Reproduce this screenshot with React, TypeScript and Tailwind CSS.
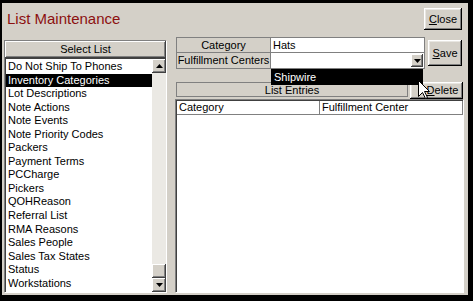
import React from "react";

const items = [
  "Do Not Ship To Phones",
  "Inventory Categories",
  "Lot Descriptions",
  "Note Actions",
  "Note Events",
  "Note Priority Codes",
  "Packers",
  "Payment Terms",
  "PCCharge",
  "Pickers",
  "QOHReason",
  "Referral List",
  "RMA Reasons",
  "Sales People",
  "Sales Tax States",
  "Status",
  "Workstations",
];

const raised =
  "bg-[#d4d0c8] shadow-[inset_-1px_-1px_0_#404040,inset_1px_1px_0_#ffffff,inset_-2px_-2px_0_#808080,inset_2px_2px_0_#d4d0c8]";
const btn =
  "flex items-center justify-center bg-[#d4d0c8] shadow-[inset_-1px_-1px_0_#000000,inset_1px_1px_0_#ffffff,inset_-2px_-2px_0_#808080,inset_2px_2px_0_#e8e6e1]";

function Tri({ up }: { up?: boolean }) {
  return (
    <svg width="7" height="4" viewBox="0 0 7 4">
      {up ? <path d="M3.5 0 L7 4 L0 4 Z" fill="#000" /> : <path d="M0 0 L7 0 L3.5 4 Z" fill="#000" />}
    </svg>
  );
}

export default function App() {
  return (
    <div className="w-[473px] h-[301px] bg-black pt-[3px] pl-[2px] pr-[5px] pb-[6px]">
      <div className="relative flex h-full flex-col bg-[#d4d0c8] text-[11px] text-black font-['Liberation_Sans',Arial,sans-serif]">
        {/* title row */}
        <div className="flex h-[34px] items-start justify-between">
          <div className="ml-[5px] mt-[6px] text-[15px] leading-[20px] text-[#8c1010]">List Maintenance</div>
          <div className={`${btn} mr-[6px] mt-[5px] h-[22px] w-[38px]`}>
            <span>
              <span className="underline">C</span>lose
            </span>
          </div>
        </div>

        {/* body */}
        <div className="flex">
          {/* left panel */}
          <div className="ml-[2px] mt-[3px] flex h-[252px] w-[162px] flex-col border-t border-l border-[#808080] shadow-[1px_1px_0_#ffffff]">
            <div className={`${raised} h-[17px] text-center leading-[16px]`}>Select List</div>
            <div className="flex flex-1 border-t border-l border-[#404040] bg-white">
              <div className="flex-1 pt-[1px]">
                {items.map((it) => {
                  const sel = it === "Inventory Categories";
                  return (
                    <div
                      key={it}
                      className={`h-[13.55px] whitespace-nowrap pl-[2px] leading-[13.55px] ${
                        sel ? "bg-black text-white" : ""
                      }`}
                    >
                      {it}
                    </div>
                  );
                })}
              </div>
              <div className="flex w-[14px] flex-col bg-[#ebe9e4]">
                <div className={`${raised} flex h-[14px] items-center justify-center`}>
                  <Tri up />
                </div>
                <div className="flex-1" />
                <div className={`${raised} h-[14px]`} />
                <div className={`${raised} flex h-[14px] items-center justify-center`}>
                  <Tri />
                </div>
              </div>
            </div>
          </div>

          {/* right area */}
          <div className="ml-[9px] flex w-[288px] flex-col">
            <div className="flex">
              <div className="relative ml-[1px] w-[249px]">
                <div className="flex h-[16px]">
                  <div className="w-[95px] border border-[#808080] bg-[#d4d0c8] text-center leading-[14px]">Category</div>
                  <div className="flex-1 border-t border-r border-b border-[#808080] bg-white pl-[2px] leading-[14px]">Hats</div>
                </div>
                <div className="flex h-[16px]">
                  <div className="w-[95px] border-x border-b border-[#808080] bg-[#d4d0c8] text-center leading-[15px]">
                    Fulfillment Centers
                  </div>
                  <div className="flex flex-1 items-center justify-end border-r border-b border-[#808080] bg-white pr-[1px]">
                    <div className={`${raised} flex h-[13px] w-[12px] items-center justify-center`}>
                      <Tri />
                    </div>
                  </div>
                </div>
                <div className="absolute left-[95px] top-[32px] z-10 h-[16px] w-[152px] bg-black pl-[3px] leading-[16px] text-white">
                  Shipwire
                </div>
              </div>
              <div className={`${btn} ml-[3px] mt-[3px] h-[26px] w-[34px]`}>
                <span>
                  <span className="underline">S</span>ave
                </span>
              </div>
            </div>

            <div className="mt-[13px] flex">
              <div className="ml-[1px] h-[15px] w-[232px] border border-[#808080] bg-[#d4d0c8] text-center leading-[14px]">
                List Entries
              </div>
              <div className={`${btn} ml-[2px] h-[17px] w-[53px] pl-[12px]`}>
                <span>
                  <span className="underline">D</span>elete
                </span>
              </div>
            </div>

            <div className="h-[193px] border-t border-l border-[#808080] shadow-[1px_1px_0_#ffffff]">
              <div className="h-full border-t border-l border-[#404040] bg-white">
                <div className="flex h-[14px] leading-[13px]">
                  <div className="w-[143px] border-r border-b border-[#808080] pl-[2px]">Category</div>
                  <div className="flex-1 border-r border-b border-[#808080] pl-[2px]">Fulfillment Center</div>
                </div>
              </div>
            </div>
          </div>
        </div>

        {/* mouse cursor */}
        <svg className="absolute left-[416px] top-[77px] z-20" width="13" height="20" viewBox="0 0 13 20">
          <path
            d="M0.5 0.5 L0.5 16.5 L4.5 12.5 L7.5 18.5 L9.5 17.5 L6.5 11.5 L11.5 11.5 Z"
            fill="#ffffff"
            stroke="#000000"
            strokeWidth="1"
            strokeLinejoin="miter"
          />
        </svg>
      </div>
    </div>
  );
}
